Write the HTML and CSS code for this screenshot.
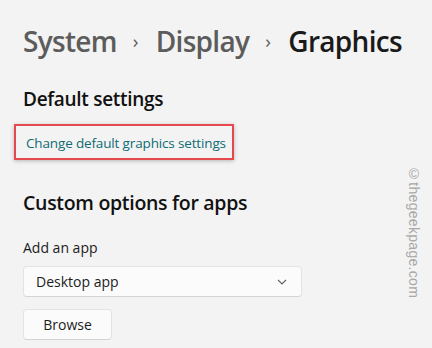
FILE: index.html
```html
<!DOCTYPE html>
<html lang="en">
  <head>
    <meta charset="UTF-8" />
    <title>Settings - Graphics</title>
    <link rel="stylesheet" href="styles.css">
  </head>
  <body>
    <main class="page">
      <nav class="crumbs">
        <span class="crumb">System</span>
        <span class="sep">&#8250;</span>
        <span class="crumb">Display</span>
        <span class="sep">&#8250;</span>
        <span class="crumb current">Graphics</span>
      </nav>

      <h2 class="section-title">Default settings</h2>
      <div class="highlight">
        <a href="#" class="link">Change default graphics settings</a>
      </div>

      <h2 class="section-title custom">Custom options for apps</h2>
      <label class="field-label">Add an app</label>
      <div class="select">
        <span>Desktop app</span>
        <svg class="chevron" width="10" height="6" viewBox="0 0 10 6">
          <path d="M1 1 L5 5 L9 1" fill="none" stroke="#606060" stroke-width="1.1" />
        </svg>
      </div>
      <button class="btn">Browse</button>
    </main>

    <div class="watermark">&copy;thegeekpage.com</div>
  </body>
</html>
```

FILE: styles.css
```css
* {
  margin: 0;
  padding: 0;
  box-sizing: border-box;
}

body {
  font-family: "Open Sans", "Noto Sans", sans-serif;
  background-color: #f3f3f3;
  color: #1b1b1b;
  width: 432px;
  height: 348px;
  overflow: hidden;
  position: relative;
}

.page {
  padding: 22px 0 0 23px;
  display: flex;
  flex-direction: column;
  align-items: flex-start;
}

.crumbs {
  display: flex;
  align-items: baseline;
  font-size: 28px;
  font-weight: 600;
  letter-spacing: -0.7px;
  line-height: 38px;
}

.crumb {
  color: #5c5c5c;
}

.crumb.current {
  color: #1a1a1a;
}

.sep {
  color: #5c5c5c;
  font-size: 19px;
  font-weight: 400;
  margin: 0 18px 0 16px;
  position: relative;
  top: -4px;
}

.section-title {
  font-size: 19px;
  font-weight: 600;
  letter-spacing: -0.3px;
  line-height: 26px;
  margin-top: 22px;
  color: #111;
}

.section-title.custom {
  font-size: 19.5px;
  margin-top: 30px;
}

.highlight {
  margin: 12px 0 0 -9px;
  padding: 5px 6px 5px 10px;
  border: 2px solid #e5484d;
  box-shadow: 0 1px 4px rgba(0, 0, 0, 0.25);
}

.link {
  color: #0f6b74;
  text-decoration: none;
  font-size: 13.5px;
  letter-spacing: -0.15px;
  line-height: 20px;
}

.field-label {
  font-size: 14px;
  margin-top: 22px;
  line-height: 20px;
  color: #1b1b1b;
}

.select {
  margin-top: 8px;
  width: 279px;
  height: 31px;
  display: flex;
  align-items: center;
  justify-content: space-between;
  padding: 0 14px 0 12px;
  background-color: #fbfbfb;
  border: 1px solid #e3e3e3;
  border-bottom-color: #d4d4d4;
  border-radius: 4px;
  font-size: 14px;
  color: #1b1b1b;
}

.btn {
  margin-top: 12px;
  width: 89px;
  height: 31px;
  background-color: #fbfbfb;
  border: 1px solid #e3e3e3;
  border-bottom-color: #d4d4d4;
  border-radius: 4px;
  font-family: inherit;
  font-size: 14px;
  color: #1b1b1b;
}

.watermark {
  position: absolute;
  left: 406px;
  top: 166px;
  writing-mode: vertical-rl;
  font-family: "Liberation Sans", sans-serif;
  font-size: 14px;
  color: #a8a8a8;
  letter-spacing: 0.3px;
}
```
